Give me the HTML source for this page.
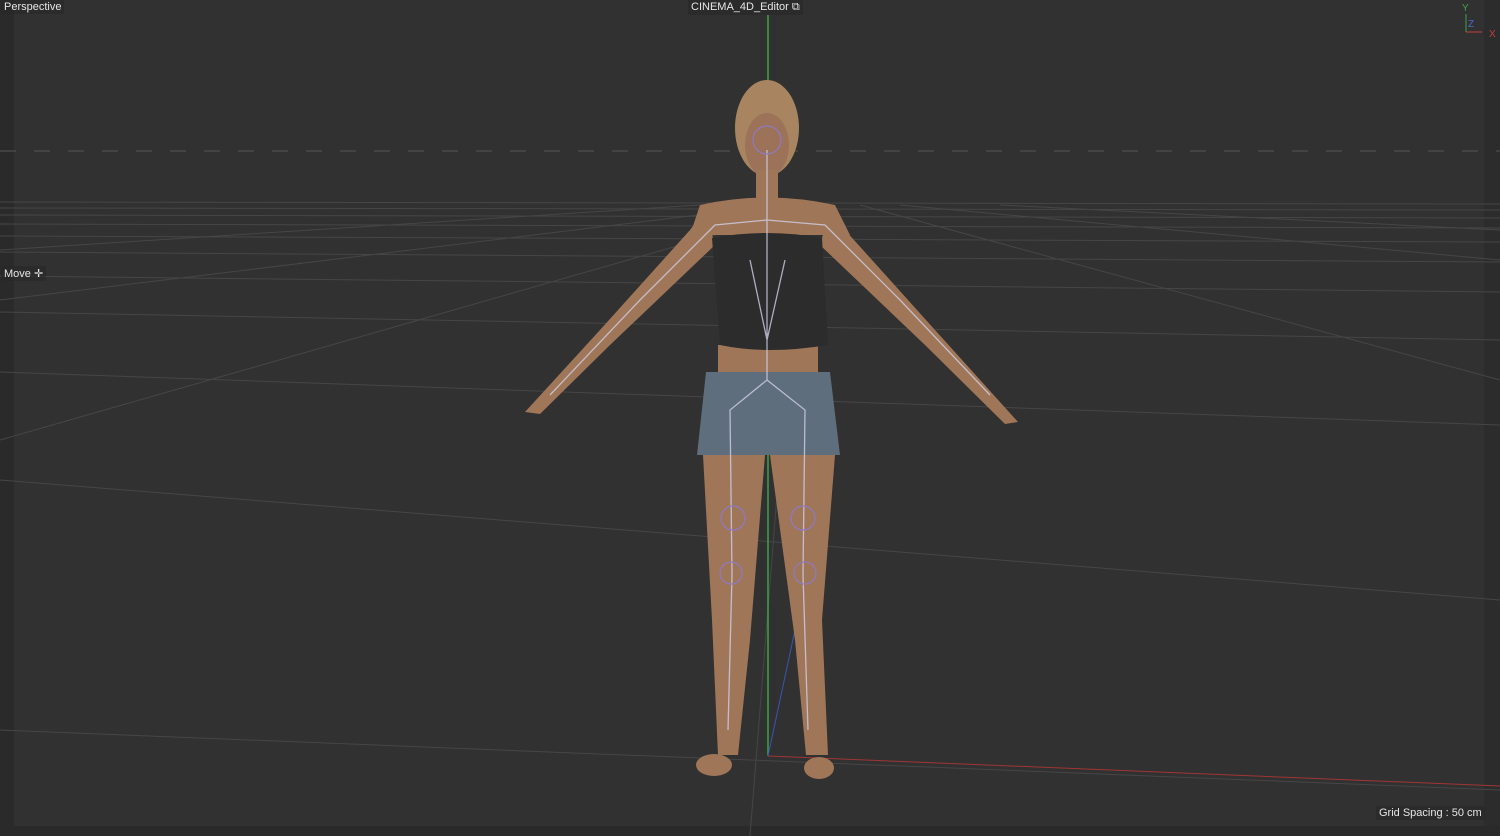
<!DOCTYPE html>
<html><head><style>
html,body{margin:0;padding:0;width:1500px;height:836px;overflow:hidden;background:#313131;font-family:"Liberation Sans",sans-serif}
.t{position:absolute;color:#e6e6e6;font-size:11px;background:rgba(40,40,40,.6);padding:1px 3px}
</style></head><body>
<svg width="1500" height="836" style="position:absolute;left:0;top:0">
<rect x="0" y="0" width="1500" height="836" fill="#313131"/>
<rect x="0" y="0" width="14" height="836" fill="#2a2a2a"/>
<rect x="1484" y="0" width="16" height="836" fill="#2c2c2c"/>
<rect x="0" y="826" width="1500" height="10" fill="#2a2a2a"/>
<line x1="0" y1="151" x2="1500" y2="151" stroke="#555" stroke-dasharray="16,18"/>
<g stroke="#464646" stroke-width="1" fill="none">
<line x1="0" y1="202" x2="1500" y2="204"/>
<line x1="0" y1="208" x2="1500" y2="210"/>
<line x1="0" y1="215" x2="1500" y2="218"/>
<line x1="0" y1="224" x2="1500" y2="228"/>
<line x1="0" y1="236" x2="1500" y2="242"/>
<line x1="0" y1="252" x2="1500" y2="262"/>
<line x1="0" y1="276" x2="1500" y2="292"/>
<line x1="0" y1="312" x2="1500" y2="340"/>
<line x1="0" y1="372" x2="1500" y2="425"/>
<line x1="0" y1="480" x2="1500" y2="600"/>
<line x1="0" y1="730" x2="1500" y2="790"/>
<line x1="0" y1="300" x2="780" y2="205"/>
<line x1="0" y1="440" x2="820" y2="205"/>
<line x1="1500" y1="380" x2="860" y2="205"/>
<line x1="1500" y1="260" x2="900" y2="205"/>
<line x1="0" y1="250" x2="700" y2="205"/>
<line x1="1500" y1="230" x2="1000" y2="205"/>
<line x1="750" y1="836" x2="800" y2="205"/>
</g>
<line x1="768" y1="15" x2="768" y2="756" stroke="#3fa14a" stroke-width="1.5"/>
<line x1="768" y1="756" x2="1500" y2="786" stroke="#a03535" stroke-width="1"/>
<line x1="768" y1="756" x2="795" y2="630" stroke="#3a55b0" stroke-width="1"/>
<g fill="#a07658">
<ellipse cx="767" cy="128" rx="32" ry="48" fill="#a88560"/>
<ellipse cx="767" cy="145" rx="22" ry="32" fill="#9c7358"/>
<rect x="756" y="170" width="22" height="30"/>
<path d="M700 205 Q767 190 835 205 L850 235 L690 235Z"/>
<path d="M705 210 L690 230 L600 330 L525 412 L540 414 L610 345 L715 245Z"/>
<path d="M830 210 L845 230 L935 330 L1018 422 L1005 424 L925 345 L820 245Z"/>
<rect x="718" y="345" width="100" height="30"/>
<path d="M703 455 L765 455 L750 640 L738 755 L718 755 L712 620Z"/>
<path d="M770 455 L835 455 L822 620 L828 755 L806 755 L795 640Z"/>
<ellipse cx="714" cy="765" rx="18" ry="11"/>
<ellipse cx="819" cy="768" rx="15" ry="11"/>
</g>
<path d="M712 238 Q767 228 822 238 L828 345 Q767 355 720 345Z" fill="#2c2c2c"/>
<path d="M706 372 L830 372 L840 455 L697 455Z" fill="#5f6e7c"/>
<g stroke="#d0d0e8" stroke-width="1.3" fill="none" opacity="0.8">
<path d="M767 150 L767 380 M767 380 L730 410 L732 575 L728 730 M767 380 L805 410 L803 575 L808 730 M767 220 L715 225 L640 300 L550 395 M767 220 L825 225 L900 300 L990 395 M750 260 L767 340 L785 260"/>
<circle cx="733" cy="518" r="12" stroke="#8c7ad8"/><circle cx="803" cy="518" r="12" stroke="#8c7ad8"/>
<circle cx="731" cy="573" r="11" stroke="#8c7ad8"/><circle cx="805" cy="573" r="11" stroke="#8c7ad8"/>
<circle cx="767" cy="140" r="14" stroke="#8c7ad8"/>
</g>
<g font-family="Liberation Sans" font-size="10">
<line x1="1466" y1="14" x2="1466" y2="32" stroke="#3fa14a"/><line x1="1466" y1="32" x2="1482" y2="32" stroke="#c04040"/>
<text x="1462" y="11" fill="#3fa14a">Y</text><text x="1468" y="27" fill="#4a6ad0">Z</text><text x="1489" y="37" fill="#c04040">X</text>
</g>
</svg>
<div class="t" style="left:1px;top:0">Perspective</div>
<div class="t" style="left:688px;top:0">CINEMA_4D_Editor ⧉</div>
<div class="t" style="left:1px;top:266px">Move ✛</div>
<div class="t" style="left:1376px;top:806px">Grid Spacing : 50 cm</div>
</body></html>
